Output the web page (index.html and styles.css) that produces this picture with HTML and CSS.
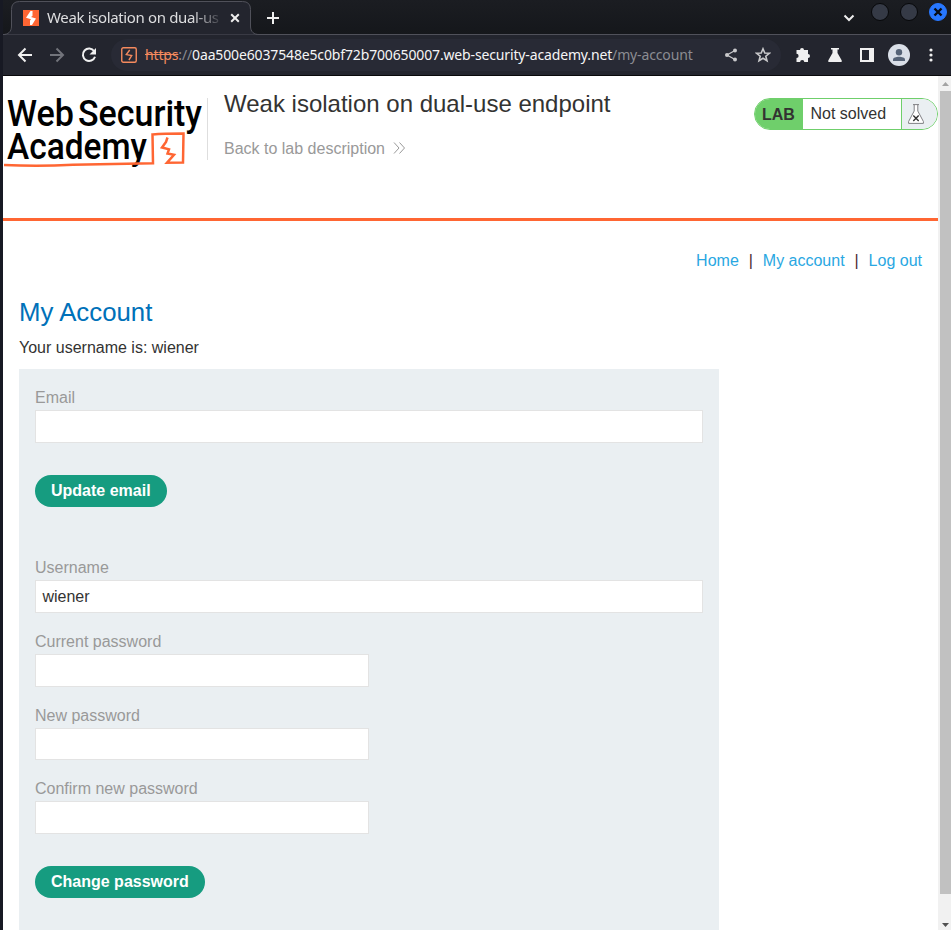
FILE: index.html
```html
<!DOCTYPE html>
<html lang="en">
<head>
<meta charset="utf-8">
<title>Weak isolation on dual-use endpoint</title>
<link rel="stylesheet" href="styles.css">
</head>
<body>
<div class="window">
  <div class="tabstrip">
    <div class="tab">
      <svg class="tab-edge" width="256" height="35" viewBox="0 0 256 35"><path class="tab-shape" d="M0 34.500C5 34.500 8.500 32 8.500 26V9.500Q8.500 1.500 16.500 1.500H239.500Q247.500 1.500 247.500 9.500V26C247.500 32 251 34.500 256 34.500"/></svg>
      <svg class="favicon" width="16" height="16" viewBox="0 0 16 16"><path fill="#ff6633" d="M0 0H16V16H0Z"/><path fill="#fff" d="M7.500 1H9.500V6L8 7 13 8.500 9 15H7V10.500L8 9.300 3 7.800Z"/></svg>
      <span class="tab-title">Weak isolation on dual-us</span>
      <svg class="tab-close" width="10" height="10" viewBox="0 0 10 10"><path d="M1.200 1.200 8.800 8.800M8.800 1.200 1.200 8.800"/></svg>
    </div>
    <svg class="new-tab" width="14" height="14" viewBox="0 0 14 14"><path d="M7 1V13M1 7H13"/></svg>
    <div class="window-controls">
      <svg class="chevron" width="12" height="8" viewBox="0 0 12 8"><path d="M1.500 1.500 6 6 10.500 1.500"/></svg>
      <span class="control"></span>
      <span class="control"></span>
      <span class="control control-close"><svg width="10" height="10" viewBox="0 0 10 10"><path d="M1.500 1.500 8.500 8.500M8.500 1.500 1.500 8.500"/></svg></span>
    </div>
  </div>

  <div class="toolbar">
    <svg class="nav" width="16" height="16" viewBox="0 0 16 16"><path d="M15 8H2M8.500 1.500 2 8 8.500 14.500"/></svg>
    <svg class="nav nav-off" width="16" height="16" viewBox="0 0 16 16"><path d="M1 8H14M7.500 1.500 14 8 7.500 14.500"/></svg>
    <svg class="nav" width="16" height="16" viewBox="0 0 16 16"><path d="M13.200 4.200A6.200 6.200 0 1 0 14 9.700"/><path class="solid" d="M15 1V7.500H8.500Z"/></svg>
    <div class="address">
      <svg width="16" height="16" viewBox="0 0 16 16" class="site-icon"><rect x=".75" y=".75" width="14.500" height="14.500" rx="1.500"/><path d="M8.700 3 5.300 7.600 10.700 8.600 7.900 13"/></svg>
      <span class="url"><span class="scheme">https</span><span class="dim">://</span>0aa500e6037548e5c0bf72b700650007.web-security-academy.net<span class="dim">/my-account</span></span>
      <svg class="share" width="14" height="14" viewBox="0 0 14 14"><path d="M11 2.500 3 7 11 11.500"/><circle cx="11" cy="2.500" r="2"/><circle cx="3" cy="7" r="2"/><circle cx="11" cy="11.500" r="2"/></svg>
      <svg class="star" width="16" height="16" viewBox="0 0 16 16"><path d="M8 1.800 9.800 6 14.300 6.300 10.800 9.200 12 13.800 8 11.300 4 13.800 5.200 9.200 1.700 6.300 6.200 6Z"/></svg>
    </div>
    <div class="actions">
      <svg width="16" height="16" viewBox="0 0 16 16"><path d="M1.500 3H5A2 2 0 1 1 9 3H13V7A2 2 0 1 1 13 11V15H9.300A2.100 2.100 0 0 0 5.100 15H1.500V11A2.100 2.100 0 0 0 1.500 6.800Z"/></svg>
      <svg width="16" height="16" viewBox="0 0 16 16"><path d="M4 1H12V2.500H10.500V6L14.500 13Q15.500 15 13.500 15H2.500Q.5 15 1.500 13L5.500 6V2.500H4Z"/></svg>
      <svg width="16" height="16" viewBox="0 0 16 16"><path fill-rule="evenodd" d="M1 1H15V15H1ZM3 3V13H10V3Z"/></svg>
      <svg class="avatar" width="22" height="22" viewBox="0 0 22 22"><circle cx="11" cy="11" r="11" fill="#dadfe8"/><circle cx="11" cy="8.200" r="3.200" fill="#566377"/><path fill="#566377" d="M5 17V15.500C5 11.800 17 11.800 17 15.500V17Z"/></svg>
      <svg class="menu" width="4" height="14" viewBox="0 0 4 14"><circle cx="2" cy="2" r="1.600"/><circle cx="2" cy="7" r="1.600"/><circle cx="2" cy="12" r="1.600"/></svg>
    </div>
  </div>

  <div class="viewport">
    <div class="page">
      <header class="lab-header">
        <svg class="logo" width="204" height="84" viewBox="0 0 204 84">
          <text x="4" y="34" textLength="67" lengthAdjust="spacingAndGlyphs">Web</text>
          <text x="75" y="34" textLength="124" lengthAdjust="spacingAndGlyphs">Security</text>
          <text x="4" y="67" textLength="140" lengthAdjust="spacingAndGlyphs">Academy</text>
          <path d="M1 73Q35 74.500 70 72.800L150 71.300 149.500 42.500Q160 41.500 180.500 41.500L180 70.500 164 70.800 171 62.800 164.500 61.500 166 57.300 159 55.500 163 50 164.500 45.500"/>
        </svg>
        <div class="title-block">
          <h2>Weak isolation on dual-use endpoint</h2>
          <a class="back">Back to lab description
            <svg width="12" height="12" viewBox="0 0 12 12"><path d="M1 .5 6 6 1 11.500M6.500 .5 11.500 6 6.500 11.500"/></svg></a>
        </div>
        <div class="status">
          <span class="status-lab">LAB</span>
          <span class="status-text">Not solved</span>
          <span class="status-icon"><svg width="16" height="20" viewBox="0 0 16 20"><path class="flask" d="M5 .6H11M6.200 .6V7L.6 17.500V19.400H15.400V17.500L9.800 7V.6"/><path class="cross" d="M5.300 11.500 10.700 17M10.700 11.500 5.300 17"/></svg></span>
        </div>
      </header>
      <nav class="links"><a>Home</a><span>|</span><a>My account</a><span>|</span><a>Log out</a></nav>
      <main class="account">
        <h1>My Account</h1>
        <p>Your username is: wiener</p>
        <div class="panel">
          <form>
            <label>Email</label>
            <input class="wide" type="text">
            <button type="button">Update email</button>
          </form>
          <form class="password-form">
            <label>Username</label>
            <input class="wide" type="text" value="wiener">
            <label>Current password</label>
            <input type="password">
            <label>New password</label>
            <input type="password">
            <label>Confirm new password</label>
            <input type="password">
            <button type="button">Change password</button>
          </form>
        </div>
      </main>
    </div>
    <div class="scrollbar">
      <svg width="13" height="15" viewBox="0 0 13 15"><path fill="#a3a3a3" d="M4 10 7.500 6 11 10Z"/></svg>
      <div class="thumb"></div>
      <svg class="arrow-down" width="13" height="15" viewBox="0 0 13 15"><path fill="#505050" d="M4 8 7.500 12 11 8Z"/></svg>
    </div>
  </div>
</div>
</body>
</html>
```

FILE: styles.css
```css
* { box-sizing: border-box; }
body { margin: 0; font-family: "Liberation Sans", Arial, sans-serif; font-size: 16px; color: #333332; }
svg { display: block; flex: none; }
.window { height: 930px; padding-left: 3px; background: #171923; overflow: hidden; display: flex; flex-direction: column; }

.tabstrip { height: 35px; display: flex; align-items: flex-start; background: linear-gradient(#1b1d22, #15171b); border-bottom: 1px solid #50515a; flex: none; }
.tab { position: relative; width: 256px; height: 35px; padding: 9px 0 0 20px; display: flex; align-items: flex-start; }
.tab-edge { position: absolute; left: 0; top: 0; }
.tab-shape { fill: #23252e; stroke: #50515a; }
.favicon { position: relative; margin-top: 1px; }
.tab-title { position: relative; width: 175px; margin-left: 8px; white-space: nowrap; font: 15px/18px "Noto Sans", sans-serif; letter-spacing: -.36px; color: #dedee0; mask-image: linear-gradient(90deg, #000 145px, transparent 177px); margin-top: -1px; }
.tab-close { position: relative; margin: 4px 0 0 8px; stroke: #eee; stroke-width: 2; }
.new-tab { margin: 11px 0 0 7px; stroke: #f0f0f0; stroke-width: 2; }
.window-controls { margin-left: auto; display: flex; padding-right: 4px; }
.chevron { margin: 14px 16px 0 0; fill: none; stroke: #eee; stroke-width: 2; }
.control { width: 18px; height: 18px; margin: 3px 0 0 11px; border: 1px solid #07080a; border-radius: 50%; background: #353a46; }
.chevron + .control { margin-left: 0; }
.control-close { display: grid; place-items: center; border-color: #2777ff; background: #2777ff; }
.control-close svg { stroke: #080b12; stroke-width: 2.4; }

.toolbar { height: 41px; flex: none; display: flex; align-items: center; padding-left: 14px; background: #23252e; border-bottom: 1px solid #09090b; }
.nav { margin-right: 16px; fill: none; stroke: #f0f0f0; stroke-width: 2; }
.nav-off { stroke: #72747b; }
.nav .solid { fill: #f0f0f0; stroke: none; }
.address { width: 670px; height: 32px; margin-left: -2px; padding-left: 10px; border-radius: 16px; background: #282a35; display: flex; align-items: center; }
.site-icon { fill: none; stroke: #f58a5e; stroke-width: 1.400; }
.url { margin-left: 8px; width: 550px; white-space: nowrap; font: 14px/20px "Noto Sans", sans-serif; letter-spacing: -.145px; color: #f5f5f6; }
.scheme { color: #f58a5e; text-decoration: line-through; }
.dim { color: #8b8c92; }
.share { margin-left: 29px; fill: #c9c9cb; }
.share path { fill: none; stroke: #c9c9cb; stroke-width: 1.300; }
.star { margin-left: 17px; fill: none; stroke: #c9c9cb; stroke-width: 1.600; }
.actions { display: flex; align-items: center; gap: 16px; margin-left: 14px; fill: #f0f0f0; }
.avatar { margin-left: -3px; }
.menu { margin-left: 3px; }

.viewport { flex: 1; min-height: 0; display: flex; background: #fff; }
.page { width: 935px; overflow: hidden; }
.lab-header { height: 145px; display: flex; border-bottom: 3px solid #ff6633; }
.logo { margin-top: 16px; font: 500 37px Roboto, sans-serif; fill: #000; }
.logo path { fill: none; stroke: #ff6633; stroke-width: 2.500; }
.title-block { height: 62px; margin-top: 22px; padding-left: 16px; border-left: 1px solid #dedede; }
h2 { margin: -8px 0 0; font-size: 24px; line-height: 28px; font-weight: 400; }
.back { display: flex; align-items: center; gap: 8px; margin-top: 21px; line-height: 20px; color: #999; }
.back svg { margin-top: -2px; fill: none; stroke: #999; }
.status { width: 184px; height: 32px; margin: 22px 0 0 auto; display: flex; line-height: 30px; border: 1px solid #6fcf6b; border-radius: 16px; overflow: hidden; }
.status-lab { width: 48px; padding-left: 7px; background: #6fcf6b; font-weight: 700; line-height: 31px; }
.status-text { width: 98px; padding-left: 7.5px; }
.status-icon { flex: 1; padding: 5px 0 0 6px; background: #eaeff2; border-left: 1px solid #6fcf6b; }
.flask { fill: #fff; stroke: #808184; }
.cross { stroke: #333; stroke-width: 1.400; }
.links { display: flex; justify-content: flex-end; padding: 30px 16px 0 0; line-height: 20px; color: #4a2a30; }
.links a { color: #29a7e2; }
.links span { width: 24px; text-align: center; }
.account { padding-left: 16px; }
h1 { margin: 25px 0 0; font-size: 25.8px; line-height: 32px; font-weight: 400; color: #0071b9; }
p { margin: 10px 0 0; line-height: 20px; }
.panel { width: 700px; height: 600px; margin-top: 11px; padding: 19px 16px; background: #eaeff2; }
form { display: block; }
label { display: block; line-height: 20px; color: #999; }
input { display: block; width: 334px; height: 32.67px; margin: 2px 0 19px; padding: 0 6.4px; border: 1px solid #e3e3e3; background: #fff; font: 16px "Liberation Sans", sans-serif; color: #333332; }
input.wide { width: 668px; }
button { display: block; height: 32px; margin: 32px 0 0; padding: 0 16px; border: 0; border-radius: 16px; background: #169c80; color: #fff; font: 700 16px "Liberation Sans", sans-serif; }
.password-form { margin-top: 51.6px; }
.scrollbar { display: flex; flex-direction: column; width: 13px; background: #f1f1f1; }
.thumb { height: 803px; margin-left: 2px; background: #c1c1c1; }
.arrow-down { margin-top: auto; }
```
